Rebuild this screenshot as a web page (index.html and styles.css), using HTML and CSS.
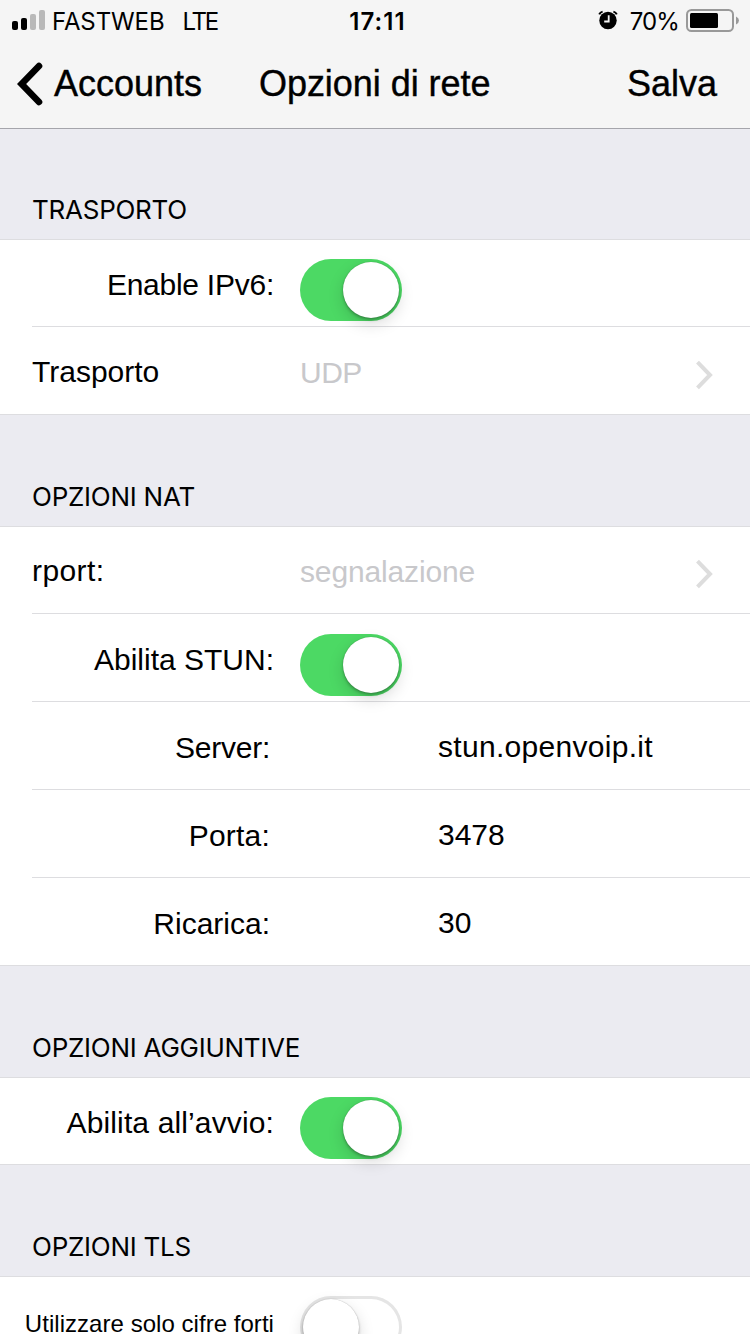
FILE: index.html
```html
<!DOCTYPE html>
<html lang="it">
<head>
<meta charset="utf-8">
<title>Opzioni di rete</title>
<link rel="stylesheet" href="styles.css">
</head>
<body>
<div class="screen">
  <header class="top">
    <div class="status">
      <div class="status-left">
        <svg class="signal" width="34" height="22" viewBox="0 0 34 22">
          <rect x="0" y="11" width="6" height="9" rx="2"/>
          <rect x="9" y="8" width="6" height="12" rx="2"/>
          <rect class="dim" x="18" y="4" width="6" height="16" rx="2"/>
          <rect class="dim" x="27" y="0" width="6" height="20" rx="2"/>
        </svg>
        <span class="carrier">FASTWEB</span>
        <span class="network">LTE</span>
      </div>
      <div class="clock">17:11</div>
      <div class="status-right">
        <svg class="alarm" width="20" height="20" viewBox="0 0 20 20">
          <circle cx="10" cy="10.500" r="8.700"/>
          <path class="bell" d="M1.200 4.400Q2.200 2.300 4.600 1.600M18.800 4.400Q17.800 2.300 15.400 1.600"/>
          <path class="hands" d="M10.700 5.200V11.500H6.200"/>
        </svg>
        <span class="percent">70%</span>
        <svg class="battery" width="54" height="24" viewBox="0 0 54 24">
          <rect class="case" x="1" y="1" width="46" height="21" rx="4.500"/>
          <rect x="4" y="4" width="28" height="15" rx="1.500"/>
          <path class="tip" d="M50 7.500Q53 9 53 11.500T50 15.500Z"/>
        </svg>
      </div>
    </div>
    <nav class="nav">
      <div class="back">
        <svg width="26" height="44" viewBox="0 0 26 44"><path d="M22 4L4.600 22L22 40"/></svg>
        <span class="back-text">Accounts</span>
      </div>
      <h1 class="title">Opzioni di rete</h1>
      <div class="save">Salva</div>
    </nav>
  </header>

  <section class="group">
    <h2 class="heading first">TRASPORTO</h2>
    <div class="rows">
      <div class="row short">
        <span class="label right ipv6">Enable IPv6:</span>
        <span class="toggle on"><i class="knob"></i></span>
      </div>
      <div class="row">
        <span class="label">Trasporto</span>
        <span class="choice udp">UDP</span>
        <svg class="chevron" width="20" height="32" viewBox="0 0 20 32"><path d="M3.500 3.200L16 16L3.500 28.800"/></svg>
      </div>
    </div>
  </section>

  <section class="group">
    <h2 class="heading">OPZIONI NAT</h2>
    <div class="rows">
      <div class="row short rport">
        <span class="label">rport:</span>
        <span class="choice">segnalazione</span>
        <svg class="chevron" width="20" height="32" viewBox="0 0 20 32"><path d="M3.500 3.200L16 16L3.500 28.800"/></svg>
      </div>
      <div class="row lower">
        <span class="label right">Abilita STUN:</span>
        <span class="toggle on"><i class="knob"></i></span>
      </div>
      <div class="row field">
        <span class="label right server">Server:</span>
        <span class="value host">stun.openvoip.it</span>
      </div>
      <div class="row field">
        <span class="label right port">Porta:</span>
        <span class="value">3478</span>
      </div>
      <div class="row field">
        <span class="label right">Ricarica:</span>
        <span class="value">30</span>
      </div>
    </div>
  </section>

  <section class="group">
    <h2 class="heading">OPZIONI AGGIUNTIVE</h2>
    <div class="rows">
      <div class="row short">
        <span class="label right avvio">Abilita all’avvio:</span>
        <span class="toggle on"><i class="knob"></i></span>
      </div>
    </div>
  </section>

  <section class="group">
    <h2 class="heading">OPZIONI TLS</h2>
    <div class="rows">
      <div class="row">
        <span class="label right small">Utilizzare solo cifre forti</span>
        <span class="toggle"><i class="knob"></i></span>
      </div>
    </div>
  </section>
</div>
</body>
</html>
```
FILE: styles.css
```css
* { box-sizing: border-box; }

body {
  margin: 0;
  background: #ebebf1;
  color: #000;
  font-family: "Liberation Sans", Arial, sans-serif;
}

.screen {
  width: 750px;
  height: 1334px;
  overflow: hidden;
}

svg { display: block; flex: none; }

/* Status bar and navigation */
.top {
  height: 129px;
  background: #f5f5f5;
  border-bottom: 1px solid #a5a5ab;
}

.status {
  display: grid;
  grid-template-columns: 1fr auto 1fr;
  height: 40px;
  padding: 0 11px 0 12px;
  font: 24px/43px Inter, sans-serif;
}

.status-left, .status-right { display: flex; align-items: flex-start; }
.status-right { justify-content: flex-end; }
.signal { margin-top: 10px; }
.dim { fill: #b9b9b9; }
.carrier { margin-left: 6px; letter-spacing: -0.1px; }
.network { margin-left: 18px; letter-spacing: -2.2px; }
.clock { margin-left: 4px; font-weight: 600; letter-spacing: 1.1px; }
.alarm { margin: 10px 12px 0 0; }
.bell { fill: none; stroke: #000; stroke-width: 2; }
.hands { fill: none; stroke: #f5f5f5; stroke-width: 1.8; }
.percent { margin-right: 7px; letter-spacing: -0.9px; }
.battery { margin: 9px -1px 0 0; }
.case { fill: none; stroke: #999; stroke-width: 2; }
.tip { fill: #999; }

.nav {
  display: grid;
  grid-template-columns: 242px 1fr auto;
  height: 88px;
  padding: 0 33px 0 17px;
  font-size: 36px;
  line-height: 88px;
  -webkit-text-stroke: 0.4px #000;
}

.back { display: flex; align-items: center; }
.back path { fill: none; stroke: #000; stroke-width: 6.6; stroke-linecap: round; stroke-linejoin: miter; }
.back-text { margin-left: 11px; }
.title { margin: 0; font-size: inherit; font-weight: 400; letter-spacing: -0.05px; }
.save { text-align: right; }

/* Grouped list */
.heading {
  height: 111px;
  margin: 0;
  padding: 66px 0 0 32px;
  font: 400 26px/32px Inter, sans-serif;
  letter-spacing: -0.25px;
}

.first { height: 110px; padding-top: 65px; }

.rows { border-top: 1px solid #dddde0; background: #fff; }

.row {
  position: relative;
  display: grid;
  grid-template-columns: 268px 1fr 20px;
  align-items: start;
  height: 88px;
  margin-left: 32px;
  padding-right: 36px;
  border-bottom: 1px solid #dddde0;
  font-size: 30px;
  line-height: 34px;
}

.row:last-child {
  margin-left: 0;
  padding-left: 32px;
}

.short { height: 87px; }

.label { padding-top: 28px; white-space: nowrap; }
.right { padding-right: 26px; text-align: right; }
.choice { padding-top: 28px; color: #c8c8cb; letter-spacing: -0.15px; }
.udp { padding-top: 29px; letter-spacing: -0.5px; }
.chevron { margin-top: 32px; }
.chevron path { fill: none; stroke: #ddd; stroke-width: 4; }
.rport .label { padding-top: 27px; letter-spacing: 0.4px; }
.rport .chevron { margin-top: 31px; }
.lower .label { padding-top: 29px; }
.lower .toggle { margin-top: 20px; }
.ipv6 { letter-spacing: -0.25px; }
.avvio { letter-spacing: 0.13px; }

.field { grid-template-columns: 406px 1fr; }
.field .label { padding: 29px 168px 0 0; }
.server { letter-spacing: -0.25px; }
.port { letter-spacing: 0.2px; }
.value { padding-top: 28px; }
.host { letter-spacing: 0.3px; }

.small { margin-left: -12px; padding-top: 33px; font-size: 24px; line-height: 28px; letter-spacing: 0.04px; }

.toggle {
  display: flex;
  justify-content: flex-start;
  width: 102px;
  height: 62px;
  margin-top: 19px;
  padding: 3px;
  border-radius: 31px;
  background: #fff;
  box-shadow: inset 0 0 0 3px #e5e5e5;
}

.on { justify-content: flex-end; background: #4cd964; box-shadow: none; }

.knob {
  width: 56px;
  height: 56px;
  border-radius: 50%;
  background: #fff;
  box-shadow: 0 6px 16px rgba(0, 0, 0, 0.15), 0 2px 3px rgba(0, 0, 0, 0.25), 0 0 1px rgba(0, 0, 0, 0.3);
}
```
